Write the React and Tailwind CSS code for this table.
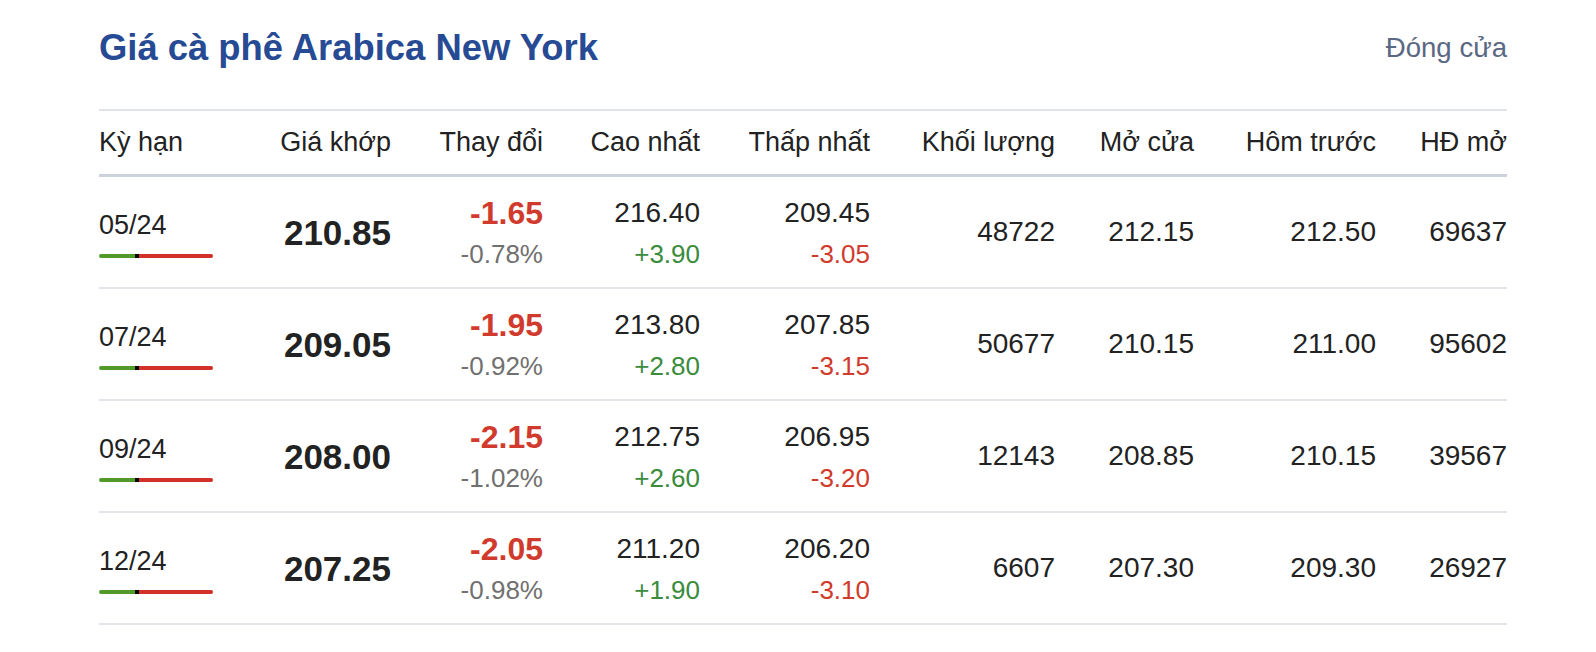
import React from 'react';

const rows = [
  { term: '05/24', price: '210.85', change: '-1.65', pct: '-0.78%', high: '216.40', highChg: '+3.90', low: '209.45', lowChg: '-3.05', volume: '48722', open: '212.15', prev: '212.50', oi: '69637' },
  { term: '07/24', price: '209.05', change: '-1.95', pct: '-0.92%', high: '213.80', highChg: '+2.80', low: '207.85', lowChg: '-3.15', volume: '50677', open: '210.15', prev: '211.00', oi: '95602' },
  { term: '09/24', price: '208.00', change: '-2.15', pct: '-1.02%', high: '212.75', highChg: '+2.60', low: '206.95', lowChg: '-3.20', volume: '12143', open: '208.85', prev: '210.15', oi: '39567' },
  { term: '12/24', price: '207.25', change: '-2.05', pct: '-0.98%', high: '211.20', highChg: '+1.90', low: '206.20', lowChg: '-3.10', volume: '6607', open: '207.30', prev: '209.30', oi: '26927' },
];

const headers = ['Giá khớp', 'Thay đổi', 'Cao nhất', 'Thấp nhất', 'Khối lượng', 'Mở cửa', 'Hôm trước', 'HĐ mở'];

const gridCols = 'grid grid-cols-[152px_140px_152px_157px_170px_185px_139px_182px_131px]';

export default function App() {
  return (
    <div className="min-h-screen bg-white text-[#222] font-['Liberation_Sans',Arial,sans-serif]">
      <div className="ml-[99px] w-[1408px]">
        {/* Title */}
        <div className="flex h-[96px] items-center justify-between">
          <h1 className="text-[36.4px] font-bold text-[#264a93] leading-none">Giá cà phê Arabica New York</h1>
          <span className="text-[27.6px] text-[#5a6883] leading-none">Đóng cửa</span>
        </div>

        {/* Table */}
        <div className="mt-[13px]">
          <div className={`${gridCols} h-[68px] items-center border-t-2 border-b-[3px] border-t-[#e1e5ea] border-b-[#cdd3dc] text-[27px]`}>
            <div>Kỳ hạn</div>
            {headers.map((h) => (
              <div key={h} className="text-right">{h}</div>
            ))}
          </div>

          {rows.map((r) => (
            <div key={r.term} className={`${gridCols} h-[112px] items-center border-b-2 border-[#e1e5ea]`}>
              <div className="flex flex-col pt-[4px]">
                <span className="text-[27px] leading-[30px]">{r.term}</span>
                <div className="mt-[14px] flex h-[4px] w-[114px] overflow-hidden rounded-full">
                  <div className="w-[36px] bg-[#4f9a2b]" />
                  <div className="w-[4px] bg-black" />
                  <div className="flex-1 bg-[#d3302a]" />
                </div>
              </div>
              <div className="text-right text-[35px] font-bold leading-none">{r.price}</div>
              <div className="flex flex-col items-end">
                <span className="text-[32px] font-bold leading-[36px] text-[#d03b2d]">{r.change}</span>
                <span className="mt-[8px] text-[26px] leading-[30px] text-[#707070]">{r.pct}</span>
              </div>
              <div className="flex flex-col items-end">
                <span className="text-[28px] leading-[36px]">{r.high}</span>
                <span className="mt-[8px] text-[26px] leading-[30px] text-[#3a8b3c]">{r.highChg}</span>
              </div>
              <div className="flex flex-col items-end">
                <span className="text-[28px] leading-[36px]">{r.low}</span>
                <span className="mt-[8px] text-[26px] leading-[30px] text-[#d03b2d]">{r.lowChg}</span>
              </div>
              <div className="text-right text-[28px]">{r.volume}</div>
              <div className="text-right text-[28px]">{r.open}</div>
              <div className="text-right text-[28px]">{r.prev}</div>
              <div className="text-right text-[28px]">{r.oi}</div>
            </div>
          ))}
        </div>
      </div>
    </div>
  );
}
